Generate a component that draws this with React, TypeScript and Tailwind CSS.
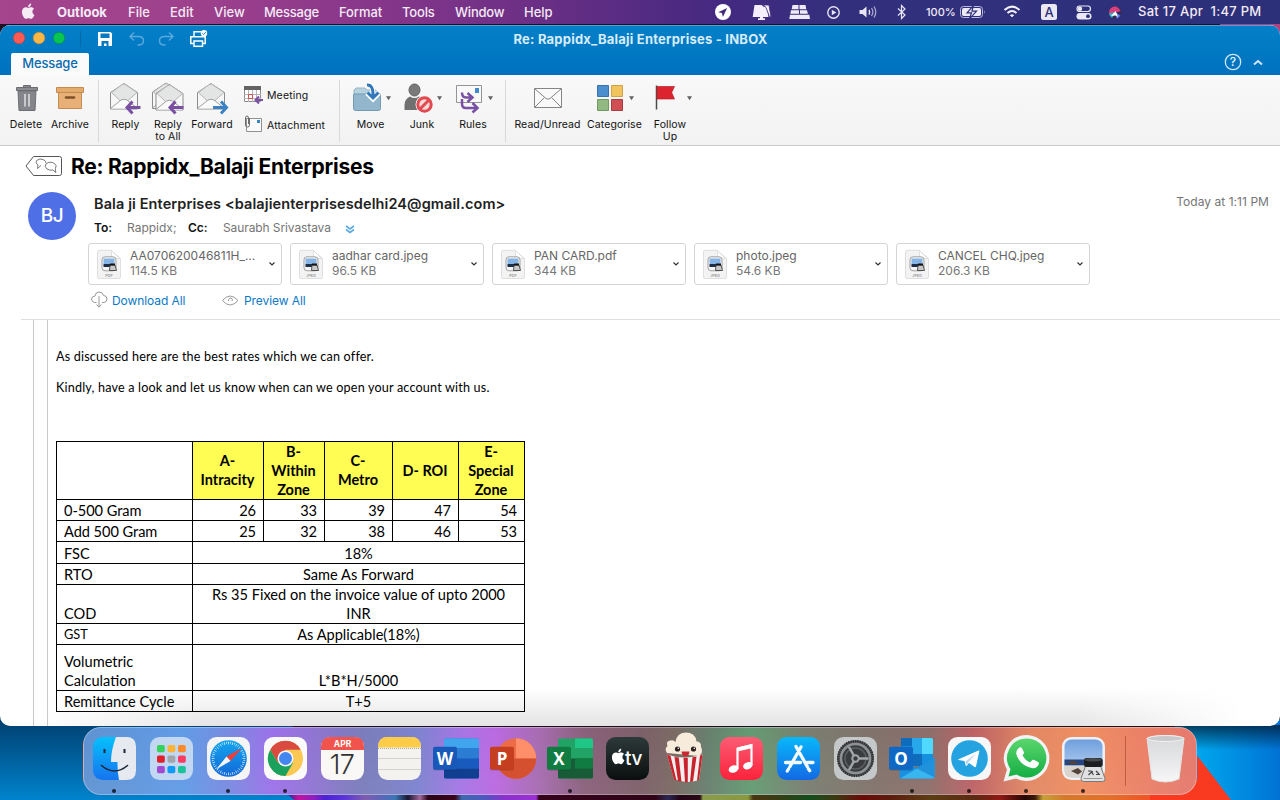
import React from "react";

type Cell = { x: number; w: number; node: React.ReactNode };

/* ---------- Menu bar ---------- */

const menus: [string, string][] = [
  ["Outlook", "w-[71px] font-bold"],
  ["File", "w-[42px]"],
  ["Edit", "w-[44px]"],
  ["View", "w-[50px]"],
  ["Message", "w-[75px] tracking-[-0.25px]"],
  ["Format", "w-[63px] tracking-[-0.1px]"],
  ["Tools", "w-[53px] tracking-[-0.15px]"],
  ["Window", "w-[69px] tracking-[-0.2px]"],
  ["Help", "w-[40px]"],
];

const APPLE =
  "M12.15 6.9c-.95 0-2.42-1.08-3.96-1.04-2.04.03-3.91 1.18-4.96 3.01-2.12 3.68-.55 9.1 1.52 12.09 1.01 1.45 2.21 3.09 3.79 3.04 1.52-.07 2.09-.99 3.94-.99 1.83 0 2.35.99 3.96.95 1.64-.03 2.68-1.48 3.68-2.95 1.16-1.69 1.64-3.33 1.66-3.41-.04-.01-3.18-1.22-3.22-4.86-.03-3.04 2.48-4.49 2.6-4.56-1.43-2.09-3.62-2.32-4.39-2.38-2-.16-3.68 1.09-4.61 1.09zM15.53 3.83c.84-1.01 1.4-2.43 1.25-3.83-1.21.05-2.66.8-3.53 1.82-.78.9-1.45 2.34-1.27 3.71 1.34.1 2.71-.69 3.56-1.7";

const statusLeft: Cell[] = [
  {
    x: 704, w: 39,
    node: (<><circle cx="723" cy="12" r="8" fill="#fff" /><path d="M727.2 8l-9 4.2 3.7.9 1 3.8z" fill="#432a7d" /></>),
  },
  {
    x: 743, w: 38,
    node: (<><path d="M754.500 5h7l2.500 2h3l1.500 10h-5.500v1.300h2v1.700h-7v-1.700h2V17h-7.300z" fill="#f4effa" /><path d="M763 5h6l2 12h-1.500L766 7.500z" fill="#f4effa" stroke="#3d2b7e" strokeWidth=".8" /></>),
  },
  {
    x: 781, w: 37,
    node: (<><path d="M792.500 5h6v4.200h-6.800zM799.500 5h6l.8 4.200h-6.800zM791 10.200h8v3.600h-8.700zM800 10.200h7l.9 3.600H800zM790 14.800h19.300l.7 4.200h-20.700z" fill="#eeeaf6" /></>),
  },
  {
    x: 818, w: 32,
    node: (<><circle cx="833.500" cy="12.500" r="5.700" fill="none" stroke="#e8e6f4" strokeWidth="1.400" /><path d="M831.800 9.800l4.500 2.700-4.500 2.700z" fill="#e8e6f4" /></>),
  },
  {
    x: 850, w: 36,
    node: (<><path d="M859.500 10h3l4-3.500v11l-4-3.500h-3z" fill="#e8e6f4" /><path d="M869 9.800q1.500 2.400 0 4.800" stroke="#e8e6f4" fill="none" strokeWidth="1.400" /><path d="M871.500 8q2.700 4 0 8M874 6.500q3.600 5.500 0 11" stroke="#a8a4cf" fill="none" strokeWidth="1.300" /></>),
  },
  {
    x: 886, w: 34,
    node: (<path d="M898 8.500l7 6.500-3.500 3.500V5.500l3.500 3.500-7 6.500" fill="none" stroke="#e8e6f4" strokeWidth="1.200" />),
  },
];

const statusRight: Cell[] = [
  {
    x: 957, w: 37,
    node: (
      <>
        <rect x="960.500" y="6.500" width="22" height="11" rx="3" fill="none" stroke="#b9b7da" />
        <rect x="962" y="8" width="19" height="8" rx="1.700" fill="#eceaf6" />
        <path d="M984 10.200v3.600q1.500-1.800 0-3.600z" fill="#b9b7da" />
        <path d="M973.500 5.500l-6.500 7.300h4.500l-2 6 7-7.600H972z" fill="#eceaf6" stroke="#30307c" strokeWidth="1.200" />
      </>
    ),
  },
  {
    x: 994, w: 37,
    node: (<g fill="none" stroke="#f1f0f9" strokeWidth="2.100"><path d="M1004.500 10q7.500-6.600 15 0" /><path d="M1007.500 13q4.500-4 9 0" /><path d="M1010.300 15.200l1.700 1.700 1.700-1.700q-1.700-1.100-3.400 0z" fill="#f1f0f9" strokeWidth=".8" /></g>),
  },
  {
    x: 1031, w: 35,
    node: (<><rect x="1041" y="4" width="16" height="16" rx="2.500" fill="#e9e8f3" /><text x="1049" y="16.600" textAnchor="middle" fontSize="13" fontWeight="500" fill="#2d3079">A</text></>),
  },
  {
    x: 1066, w: 33,
    node: (<><rect x="1077" y="6" width="13.500" height="5.500" rx="2.750" fill="none" stroke="#e9e8f3" strokeWidth="1.200" /><circle cx="1080" cy="8.700" r="2.200" fill="#e9e8f3" /><rect x="1076.500" y="13" width="15" height="6.500" rx="3.250" fill="#e9e8f3" /><circle cx="1088" cy="16.200" r="1.900" fill="#2d3079" /></>),
  },
  {
    x: 1099, w: 39,
    node: (<><circle cx="1115" cy="12.500" r="6.300" fill="#34294f" /><path d="M1109 14.500q-.5-8 6.500-8.300 4 1.500 5 5l-5 1.300z" fill="#d8407d" /><path d="M1109 13.500l7-1.500-4 6q-2.500-1.500-3-4.500z" fill="#35b3c5" /><path d="M1116 12.500l4.500 3q-2 3-4 3.200z" fill="#5d78e8" /><path d="M1111 16l4.700-5 2.300 6-2.500-1.500z" fill="#fff" /></>),
  },
];

function Strip({ cells }: { cells: Cell[] }) {
  return (
    <>
      {cells.map((c) => (
        <svg key={c.x} width={c.w} height="24" viewBox={`${c.x} 0 ${c.w} 24`} className="shrink-0">
          {c.node}
        </svg>
      ))}
    </>
  );
}

function MenuBar() {
  return (
    <div className="flex h-6 w-full items-center bg-[linear-gradient(90deg,#a4458d_0%,#9e418c_15%,#8b388b_27%,#6a2f85_42%,#452980_56%,#32307d_66%,#2c3079_100%)] text-[13px] font-medium text-[#f4eaf5]">
      <svg width="57" height="24" viewBox="0 0 57 24" className="shrink-0">
        <g transform="translate(20.500 3.500) scale(.64)"><path d={APPLE} fill="#f6ecf6" /></g>
      </svg>
      {menus.map(([name, cls]) => (
        <span key={name} className={`shrink-0 whitespace-nowrap pt-[2px] ${cls}`}>{name}</span>
      ))}
      <span className="flex-1" />
      <Strip cells={statusLeft} />
      <span className="w-[37px] shrink-0 pl-[6px] pt-px text-[11px]">100%</span>
      <Strip cells={statusRight} />
      <span className="w-[142px] shrink-0 whitespace-pre tracking-[0.28px]">Sat 17 Apr  1:47 PM</span>
    </div>
  );
}

/* ---------- Window title ---------- */

function TitleBar() {
  return (
    <div className="flex h-[50px] shrink-0 flex-col border-t border-[#4aa3dc] bg-[linear-gradient(180deg,#0380c8,#0071be)]">
      <div className="flex h-[27px] items-center">
        <svg width="220" height="27" viewBox="0 26 220 27">
          <circle cx="19" cy="38" r="5.800" fill="#fe5a54" stroke="#c9484d" strokeWidth=".8" />
          <circle cx="39" cy="38" r="5.800" fill="#fcb744" stroke="#c48f48" strokeWidth=".8" />
          <circle cx="59" cy="38" r="5.800" fill="#08c452" stroke="#079150" strokeWidth=".8" />
          <path d="M80.500 31v16" stroke="#0868a8" />
          <path d="M98 32h12.500l1.500 1.500V46H98z" fill="#fff" />
          <path d="M100.500 33.500h9v4.500h-9zM101.500 41h7v5h-2v-2.500h-2.500V46h-2.500z" fill="#0779c1" />
          <g fill="none" stroke="#5ba8db" strokeWidth="1.400">
            <path d="M134 32.500l-4 4 4 4M130.500 36.500h8q5 0 5 4.200 0 4.300-5 4.300h-1" />
            <path d="M169 32.500l4 4-4 4M172.500 36.500h-8q-5 0-5 4.200 0 4.300 5 4.300h1" />
          </g>
          <g fill="none" stroke="#fff" strokeWidth="1.500">
            <path d="M194 37v-5.300h7M202.500 37v-1M193.500 43.500h-2.700v-6.700h14.400v6.700h-2.700" />
            <rect x="194" y="41" width="8.500" height="5.300" />
          </g>
          <circle cx="204" cy="33.300" r="3.200" fill="#fff" />
          <path d="M202.400 33.300l1.200 1.200 2.200-2.300" fill="none" stroke="#0779c1" strokeWidth=".9" />
        </svg>
        <h1 className="w-[841px] pt-px text-center text-[13px] font-bold tracking-[0.22px] text-[#d8ecf8]">Re: Rappidx_Balaji Enterprises - INBOX</h1>
      </div>
      <div className="flex h-[22px] items-end justify-between pl-[11px]">
        <div className="flex h-[22px] w-[78px] items-center justify-center rounded-t-[2px] bg-[#fbfbfb] pb-px text-[13px] font-medium tracking-[-0.15px] text-[#0c6cae]">Message</div>
        <svg width="70" height="22" viewBox="1210 53 70 22">
          <circle cx="1233" cy="62" r="7.700" fill="none" stroke="#cfe6f5" strokeWidth="1.300" />
          <text x="1233" y="66.400" textAnchor="middle" fontSize="12" fontWeight="500" fill="#e8f4fb">?</text>
          <path d="M1254 64.500l4-3.500 4 3.500" fill="none" stroke="#cfe6f5" strokeWidth="2" />
        </svg>
      </div>
    </div>
  );
}

/* ---------- Ribbon ---------- */

const Envelope = ({ x }: { x: number }) => (
  <g transform={`translate(${x} 0)`} stroke="#8d8d8d" strokeWidth="1" strokeLinejoin="round">
    <path d="M.5 92.500L14 83.500l13.500 9V109H.5z" fill="#f7f7f7" />
    <path d="M1.500 92.500l10-7.500 3-1 12.500 8.500-9 8h-8z" fill="#e3e4e4" stroke="#b5b5b5" />
    <path d="M.5 108.500l10.500-8.500q3-1.500 6 0l10.500 8.500" fill="#fafafa" stroke="#9f9f9f" />
  </g>
);
const Back = ({ x }: { x: number }) => (
  <path d={`M${x + 15} 107.500h-13M${x + 7} 101.500l-5.500 6 5.500 6`} fill="none" stroke="#7a50a3" strokeWidth="3" />
);
const Caret = ({ x, y = 98 }: { x: number; y?: number }) => (
  <path d={`M${x - 2.500} ${y - 1.800}h5l-2.500 4z`} fill="#626262" />
);

const icons: Record<string, React.ReactNode> = {
  Delete: (
    <>
      <path d="M18 91h18l-1 19.500H19z" fill="#85868b" stroke="#6d6e73" />
      <path d="M16.500 87.500h21v3h-21zM23.500 87.500v-2h7v2" fill="#8b8c90" stroke="#6d6e73" />
      <path d="M25 94v12.500M29 94v12.500" stroke="#eee" strokeWidth="1.300" />
    </>
  ),
  Archive: (
    <>
      <path d="M58.500 91.500h23v17h-23z" fill="#e8b076" stroke="#c48c50" />
      <path d="M56.500 87.500h27v5h-27z" fill="#e5ab6d" stroke="#c48c50" />
      <path d="M66 97.500h8" stroke="#7d5128" strokeWidth="2.600" strokeLinecap="round" />
    </>
  ),
  Reply: (<><Envelope x={110} /><Back x={125.500} /></>),
  "Reply to All": (<><g transform="translate(0 -.5)"><Envelope x={152} /></g><g transform="translate(0 1)"><Envelope x={155.500} /></g><Back x={168.500} /></>),
  Forward: (<><Envelope x={197} /><path d="M213 107.500h13M221 101.500l5.500 6-5.500 6" fill="none" stroke="#3a82c4" strokeWidth="3" /></>),
  Move: (
    <>
      <path d="M354 96v-6l2-2h9l2 2h9v8z" fill="#b7d2df" stroke="#96b4c5" />
      <path d="M354 94h26.500v14.500q0 2-2 2h-23q-2 0-2-2V95z" fill="#92b7cc" stroke="#729bb1" />
      <path d="M367 84.500q6.500 0 6 11M367 93l6 6 6-6" fill="none" stroke="#fff" strokeWidth="5" />
      <path d="M367 85q6.500-.5 6 11.500M367.500 92.500l5.500 5.500 5.500-5.500" fill="none" stroke="#3078bb" strokeWidth="3" />
      <Caret x={388.500} />
    </>
  ),
  Junk: (
    <>
      <ellipse cx="414.500" cy="90" rx="5.500" ry="6" fill="#7b7a7a" stroke="#5f5e5e" />
      <path d="M404.500 110v-5q0-6 5.500-8.500 4.500 3 9 0 5 2 5.500 8v5.500z" fill="#717070" />
      <circle cx="424.500" cy="104.500" r="9" fill="#f4f4f4" />
      <circle cx="424.500" cy="104.500" r="6.700" fill="#f5dada" stroke="#e04a50" strokeWidth="3" />
      <path d="M420 109l9-9" stroke="#e04a50" strokeWidth="3" />
      <Caret x={439.500} />
    </>
  ),
  Rules: (
    <>
      <path d="M456.500 85.500h25v17h-25z" fill="#f9f9f9" stroke="#949494" />
      <path d="M475 88h4v5h-4z" fill="#418acb" />
      <path d="M462 92.500q0 5 4 5h5M467.500 93l5 4.500-5 4.500M462 99v5q0 4 4 4h10M472.500 103l5 5-5 4.500" fill="none" stroke="#7950a3" strokeWidth="2.500" />
      <Caret x={490.500} />
    </>
  ),
  "Read/Unread": (
    <g fill="none" stroke="#858585">
      <path d="M534.500 88.500h27v19h-27z" fill="#f9f9f9" />
      <path d="M535 89l11 9.500q2 1.500 4 0L561 89M535 107l9.500-9.500M561 107l-9.500-9.500" />
    </g>
  ),
  Categorise: (
    <>
      <path d="M597.500 85.500h11v11h-11z" fill="#4c8fce" stroke="#3674ad" />
      <path d="M611.500 85.500h11v11h-11z" fill="#f2c45e" stroke="#d2a344" />
      <path d="M597.500 99.500h11v11h-11z" fill="#93b982" stroke="#719b62" />
      <path d="M611.500 99.500h11v11h-11z" fill="#cf4f54" stroke="#ad3a40" />
      <Caret x={631.500} />
    </>
  ),
  "Follow Up": (
    <>
      <path d="M656.500 85.500v24" stroke="#4b4b4b" strokeWidth="1.500" />
      <path d="M657 86.500h17.500l-2.800 6 2.800 6.500H657z" fill="#dc242e" stroke="#b9222a" strokeWidth=".7" />
      <Caret x={689.500} />
    </>
  ),
};

function Tool({ name, x, w, center, lines }: { name: string; x: number; w: number; center: number; lines?: string[] }) {
  const shift = center * 2 - (2 * x + w);
  return (
    <div className="flex shrink-0 flex-col items-center" style={{ width: w }}>
      <svg width={w} height="37" viewBox={`${x} 80 ${w} 37`}>{icons[name]}</svg>
      <div className="flex flex-col items-center whitespace-nowrap text-[10.500px] leading-[12px] tracking-[0.08px] text-[#111]" style={{ paddingLeft: Math.max(shift, 0), paddingRight: Math.max(-shift, 0), paddingTop: 2 }}>
        {(lines ?? [name]).map((l) => <span key={l}>{l}</span>)}
      </div>
    </div>
  );
}

const Divider = () => <div className="h-[62px] w-px shrink-0 bg-[#d9d9d9]" />;

function Ribbon() {
  return (
    <div className="flex h-[71px] shrink-0 border-b border-[#cbcbcb] bg-[linear-gradient(180deg,#f9f9f9,#f2f2f2)] pt-[5px]">
      <div className="flex w-[98px] pl-1">
        <Tool name="Delete" x={4} w={44} center={26} />
        <Tool name="Archive" x={48} w={44} center={70} />
      </div>
      <Divider />
      <div className="flex w-[240px] pl-[6px]">
        <Tool name="Reply" x={105} w={41} center={125.500} />
        <Tool name="Reply to All" x={146} w={44} center={168} lines={["Reply", "to All"]} />
        <Tool name="Forward" x={190} w={44} center={212} />
        <div className="flex flex-col gap-[11px] pl-[10px] pt-[5px] text-[10.500px] leading-[19px] tracking-[0.14px] text-[#111]">
          <div className="flex h-[19px] items-center gap-1">
            <svg width="19" height="19" viewBox="244 85 19 19">
              <path d="M244.500 87.500h16v14h-16z" fill="#fff" stroke="#8b8b8b" /><path d="M244 86h17v4h-17z" fill="#636363" />
              <path d="M248.500 90v12M252.500 90v12M256.500 90v12M244 94.500h17M244 98.500h17" stroke="#b5b5b5" />
              <path d="M248.500 94.500h4v4h-4z" fill="#fff" stroke="#d5504c" />
              <path d="M264 100h-8M259 96.500l-3.500 3.500 3.500 3.500" fill="none" stroke="#7a50a3" strokeWidth="2" />
            </svg>
            <span className="pt-[2px]">Meeting</span>
          </div>
          <div className="flex h-[19px] items-center gap-1">
            <svg width="19" height="19" viewBox="244 115 19 19">
              <path d="M246.500 118.500h15v13h-15z" fill="#fafafa" stroke="#909090" /><path d="M257 120h3v3h-3z" fill="#3786c8" />
              <path d="M249.500 118v7q0 2-2 2t-2-2v-7q0-2 1.500-2t1.500 2v6" fill="none" stroke="#6c6c6c" />
            </svg>
            <span className="pt-[2px]">Attachment</span>
          </div>
        </div>
      </div>
      <Divider />
      <div className="flex w-[165px] pl-[4px]">
        <Tool name="Move" x={344} w={51} center={370.500} />
        <Tool name="Junk" x={395} w={51} center={422} />
        <Tool name="Rules" x={446} w={51} center={473} />
      </div>
      <Divider />
      <div className="flex pl-[5px]">
        <Tool name="Read/Unread" x={511} w={73} center={547.500} />
        <Tool name="Categorise" x={584} w={60} center={614.500} />
        <Tool name="Follow Up" x={644} w={54} center={670} lines={["Follow", "Up"]} />
      </div>
    </div>
  );
}

/* ---------- Message header ---------- */

const attachments = [
  { name: "AA070620046811H_...", size: "114.5 KB", type: "PDF" },
  { name: "aadhar card.jpeg", size: "96.5 KB", type: "JPEG" },
  { name: "PAN CARD.pdf", size: "344 KB", type: "PDF" },
  { name: "photo.jpeg", size: "54.6 KB", type: "JPEG" },
  { name: "CANCEL CHQ.jpeg", size: "206.3 KB", type: "JPEG" },
];

function FileIcon({ type }: { type: string }) {
  return (
    <svg width="26" height="32" viewBox="0 -1.500 26 32" className="shrink-0">
      <path d="M3 .8h12L24.500 9v18.500q0 1.500-1.500 1.500h-20Q1.500 29 1.500 27.500v-25Q1.500.8 3 .8z" fill="#f3f3f3" stroke="#d8d8d8" strokeWidth=".8" />
      <path d="M15.500 1v6.500q0 1.500 1.500 1.500h6.500z" fill="#fff" stroke="#d0d0d0" strokeWidth=".6" />
      <rect x="6" y="7.300" width="14" height="14" rx="3" fill="#f5f5f5" stroke="#999" strokeWidth=".9" />
      <path d="M7.500 9h11v5.500h-11z" fill="#86b4e4" />
      <path d="M7.500 14.500h11v3h-11z" fill="#1c2d46" />
      <path d="M14 15.500h5l1.500 5.500h-7z" fill="#c8c8c8" stroke="#333" strokeWidth=".8" />
      <path d="M14 15h5" stroke="#151515" strokeWidth="2" />
      <text x="13" y="27" textAnchor="middle" fontSize="3.800" fontWeight="600" fill="#9b9b9b">{type}</text>
    </svg>
  );
}

function Header() {
  return (
    <div className="flex shrink-0 flex-col">
      <div className="flex h-[42px] items-center">
        <svg width="71" height="42" viewBox="0 146 71 42" fill="none" stroke="#555" strokeWidth="1">
          <path d="M26 166l7.500-9.500h26q2 0 2 2v15q0 2-2 2h-26z" />
          <path d="M37.500 168.500l.5-3.500q-3.200-2-1.300-4.500 3-3 7.500-.5 2 1.500 1.500 3M41 165.500l-3.500 3" strokeWidth=".8" />
          <path d="M47 169q-3-2.500-1-5 4-3.300 8.500-.5 3 2.300.8 5l.5 4-3-2.500q-3 .7-5.800-1z" strokeWidth=".8" />
        </svg>
        <h2 className="text-[21px] font-bold tracking-[-0.27px] text-black">Re: Rappidx_Balaji Enterprises</h2>
      </div>
      <div className="flex h-[55px]">
        <div className="ml-[28px] mt-1 flex size-12 items-center justify-center rounded-full bg-[#4f6fe6] pt-px text-[19px] font-medium tracking-[-0.5px] text-white">BJ</div>
        <div className="ml-[18px] flex flex-1 flex-col">
          <div className="flex h-[31px] items-center justify-between pr-[11px] pt-px">
            <span className="text-[14.500px] font-semibold tracking-[0.1px] text-[#222]">Bala ji Enterprises &lt;balajienterprisesdelhi24@gmail.com&gt;</span>
            <span className="pb-1 text-[12px] tracking-[0.05px] text-[#757575]">Today at 1:11 PM</span>
          </div>
          <div className="flex h-[18px] items-center text-[12px] text-[#757575]">
            <b className="w-[33px] font-semibold text-[#111]">To:</b>
            <span className="w-[61px]">Rappidx;</span>
            <b className="w-[35px] font-semibold text-[#111]">Cc:</b>
            <span className="w-[122px] tracking-[-0.1px]">Saurabh Srivastava</span>
            <svg width="10" height="12" viewBox="0 -1 10 12" fill="none" stroke="#5ba9e4" strokeWidth="1.600"><path d="M1 3l4 3 4-3M1 6.500l4 3 4-3" /></svg>
          </div>
        </div>
      </div>
      <div className="flex gap-2 pl-[88px]">
        {attachments.map((a) => (
          <div key={a.name} className="flex h-[42px] w-[194px] items-center rounded-[3px] border border-[#d4d4d4] bg-white pl-[7px] pr-[5px]">
            <FileIcon type={a.type} />
            <div className="ml-2 flex flex-1 flex-col whitespace-nowrap pb-[2px] text-[12px] leading-[15px] text-[#666]">
              <span>{a.name}</span>
              <span className="text-[#777]">{a.size}</span>
            </div>
            <svg width="8" height="6" viewBox="0 0 8 6" fill="none" stroke="#333" strokeWidth="1.200"><path d="M1.500 1.500L4 4l2.500-2.500" /></svg>
          </div>
        ))}
      </div>
      <div className="flex h-[34px] items-center pb-[3px] text-[12px] tracking-[-0.08px] text-[#0b78c7]">
        <svg width="112" height="30" viewBox="0 286 112 30" fill="none" stroke="#999">
          <path d="M96.500 302.500h-2q-3-.5-3-3.500.5-3 3.500-3 .5-4 4-4 4 0 4.500 3.500 3.500 0 3.500 3.500 0 3-3 3.500h-2M99 296v11M96.500 304.500l2.500 2.700 2.500-2.700" />
        </svg>
        <span className="w-[110px]">Download All</span>
        <svg width="22" height="30" viewBox="222 286 22 30" fill="none" stroke="#999"><path d="M222.500 300.500q7.500-9 15.500 0-8 9-15.500 0z" /><path d="M231 298a2.500 2.500 0 0 0-2.500 3M231 298a2 2 0 0 1 1 3" /></svg>
        <span>Preview All</span>
      </div>
      <div className="ml-[21px] h-px bg-[#dedede]" />
    </div>
  );
}

/* ---------- Message body ---------- */

const rates = [
  ["0-500 Gram", "26", "33", "39", "47", "54"],
  ["Add 500 Gram", "25", "32", "38", "46", "53"],
];
const terms: [string[], string[]][] = [
  [["FSC"], ["18%"]],
  [["RTO"], ["Same As Forward"]],
  [["COD"], ["Rs 35 Fixed on the invoice value of upto 2000", "INR"]],
  [["GST"], ["As Applicable(18%)"]],
  [["Volumetric", "Calculation"], ["L*B*H/5000"]],
  [["Remittance Cycle"], ["T+5"]],
];
const zones = [["A-", "Intracity"], ["B-", "Within", "Zone"], ["C-", "Metro"], ["D- ROI"], ["E-", "Special", "Zone"]];

function Body() {
  return (
    <div className="flex min-h-0 flex-1 overflow-hidden pl-[33px] font-['Lato','Carlito',sans-serif] text-black">
      <div className="w-[15px] shrink-0 border-x border-[#c9c9c9]" />
      <div className="flex flex-col pl-[8px] pt-[28px]">
        <p className="h-[31px] whitespace-nowrap text-[12.600px] leading-[18px] tracking-[0.18px]">As discussed here are the best rates which we can offer.</p>
        <p className="h-[62px] whitespace-nowrap text-[12.600px] leading-[18px] tracking-[0.18px]">Kindly, have a look and let us know when can we open your account with us.</p>
        <div className="grid grid-cols-[136px_71px_61px_68px_66px_66px] grid-rows-[58px_21px_21px_22px_21px_39px_21px_46px_21px] border-l border-t border-black text-[14.600px] leading-[19px]">
          <div className="border-b border-r border-black" />
          {zones.map((z) => (
            <div key={z.join()} className="flex flex-col items-center justify-center border-b border-r border-black bg-[#fffd54] pb-px pr-px text-[14.500px] font-bold">
              {z.map((l) => <span key={l}>{l}</span>)}
            </div>
          ))}
          {rates.map((r) => r.map((v, i) => (
            <div key={v} className={`flex items-end border-b border-r border-black pl-[7px] pr-[7px] tracking-[-0.05px] ${i ? "justify-end" : ""}`}>{v}</div>
          )))}
          {terms.map(([k, v]) => (
            <React.Fragment key={k[0]}>
              <div className={`flex flex-col justify-end whitespace-nowrap border-b border-r border-black pl-[7px] ${k[0] === "GST" ? "text-[12.800px]" : ""}`}>
                {k.map((l) => <span key={l}>{l}</span>)}
              </div>
              <div className="col-span-5 flex flex-col items-center justify-end whitespace-nowrap border-b border-r border-black">
                {v.map((l) => <span key={l}>{l}</span>)}
              </div>
            </React.Fragment>
          ))}
        </div>
      </div>
    </div>
  );
}

/* ---------- Dock ---------- */

const Tile = ({ fill }: { fill: string }) => <rect x="7" y="7" width="43" height="43" rx="9.500" fill={fill} />;
const Badge = ({ fill, letter }: { fill: string; letter: string }) => (
  <>
    <rect x="5" y="17.500" width="24" height="23" rx="2" fill="#000" opacity=".18" />
    <rect x="5" y="16.800" width="24" height="23" rx="2" fill={fill} />
    <text x="17" y="34.500" textAnchor="middle" fontSize="17" fontWeight="700" fill="#fff" fontFamily="Open Sans, sans-serif">{letter}</text>
  </>
);

const polar = (deg: number, r: number, c = 28.500) => [c + r * Math.sin((deg * Math.PI) / 180), c - r * Math.cos((deg * Math.PI) / 180)];
const ticks = Array.from({ length: 48 }, (_, i) => {
  const [a, b] = polar(i * 7.500, 16.800);
  const [c, d] = polar(i * 7.500, i % 2 ? 15 : 14);
  return `M${a} ${b}L${c} ${d}`;
}).join("");

const padColors = ["#36d25d", "#fcb437", "#fa8a2b", "#e0202c", "#a2a5aa", "#fb3a63", "#a04ad0", "#1299f2", "#1cc39a"];

const apps: { dot?: boolean; art: React.ReactNode }[] = [
  {
    dot: true,
    art: (
      <>
        <Tile fill="url(#finder)" />
        <path d="M30 7h10.500Q50 7 50 16.500v24Q50 50 40.500 50H33q-1.700-8-1.500-18H25Q25 20 30 7z" fill="#e6e9f0" />
        <path d="M18.500 19v4M38.500 19v4" stroke="#1c2635" strokeWidth="2" />
        <path d="M15.500 35.500q13 11 26 0" fill="none" stroke="#1d2735" strokeWidth="1.600" strokeLinecap="round" />
      </>
    ),
  },
  { art: (<><Tile fill="#c2d7f1" />{padColors.map((c, i) => <rect key={c} x={14 + (i % 3) * 10.500} y={15 + Math.floor(i / 3) * 10.500} width="7.800" height="7.300" rx="1.700" fill={c} />)}</>) },
  {
    dot: true,
    art: (<><Tile fill="#f5f5f5" /><circle cx="28.500" cy="28.500" r="18.300" fill="url(#safari)" /><path d={ticks} stroke="#d9edfb" strokeWidth=".8" /><path d="M42 18L30.500 31l-4-4.500z" fill="#ef3d38" /><path d="M16 39.500l10.500-13 4 4.500z" fill="#f5f5f5" /></>),
  },
  {
    dot: true,
    art: (
      <>
        <Tile fill="#fafafa" />
        <circle cx="28.500" cy="28.500" r="17.500" fill="#fcc854" />
        <path d="M13.300 19.700a17.500 17.500 0 0 1 30.400 0H28.500L21 33z" fill="#da4b3f" />
        <path d="M13.300 19.700A17.500 17.500 0 0 0 28.500 46l7.600-13.200-15.100.2z" fill="#1aa15d" />
        <circle cx="28.500" cy="28.500" r="8" fill="#f7f7f7" /><circle cx="28.500" cy="28.500" r="6.500" fill="#4486f0" />
      </>
    ),
  },
  {
    art: (
      <>
        <Tile fill="#f9f8f7" /><path d="M7 20v-3.500Q7 7 16.500 7h24Q50 7 50 16.500V20z" fill="#f1544d" />
        <text x="28.500" y="17" textAnchor="middle" fontSize="8.500" fontWeight="700" fill="#fff">APR</text>
        <text x="28" y="43.500" textAnchor="middle" fontSize="27" fontWeight="300" fill="#333" letterSpacing="-.5">17</text>
      </>
    ),
  },
  { art: (<><Tile fill="#f3f2ef" /><path d="M7 17.500v-1Q7 7 16.500 7h24Q50 7 50 16.500v1z" fill="#fccb47" /><path d="M7 18.500h43" stroke="#b1aaa0" strokeDasharray="1 1" /><path d="M7 28.500h43M7 39.500h43" stroke="#d2d1ce" /></>) },
  { art: (<><rect x="16" y="8.500" width="35" height="40" rx="2" fill="#2b7cd3" /><path d="M16 18V10.500q0-2 2-2h31q2 0 2 2V18z" fill="#41a5ee" /><path d="M16 28.500h35v10H16z" fill="#185abd" /><path d="M16 38.500h35V47q0 1.500-2 1.500H18q-2 0-2-1.500z" fill="#103f91" /><Badge fill="#1858b8" letter="W" /></>) },
  { art: (<><circle cx="31" cy="28.500" r="20.200" fill="#ed6c47" /><path d="M31 8.300a20.200 20.200 0 0 1 20.200 20.200H31z" fill="#ff8f6b" /><path d="M10.800 28.500a20.200 20.200 0 0 0 40.400 0z" fill="#d5502f" /><Badge fill="#c43e1f" letter="P" /></>) },
  { dot: true, art: (<><rect x="16" y="8.500" width="35" height="40" rx="2" fill="#21a366" /><path d="M33 8.500h16q2 0 2 2V18H33z" fill="#1fc786" /><path d="M16 28.500h35V47q0 1.500-2 1.500H18q-2 0-2-1.500z" fill="#185c37" /><path d="M33 28.500h18v10H33z" fill="#107c41" /><Badge fill="#107c41" letter="X" /></>) },
  {
    art: (<><Tile fill="url(#tv)" /><g transform="translate(11.500 18.800) scale(.64)"><path d={APPLE} fill="#fff" /></g><text x="26" y="34.500" fontSize="19" fontWeight="500" fill="#fff" letterSpacing="-.3">tv</text></>),
  },
  {
    art: (
      <>
        <path d="M11 24q-3-4 .5-7-2-5 3-5.500 3-1 5 1.500 1-9 10-9.500 10 0 11 9 5 0 4.500 5.500 3 5-2 9z" fill="#f7ecdc" transform="translate(0 -1)" />
        <path d="M11 24.500q16 6 35.500 0l-3.500 25.500q-13 4.500-25-1z" fill="#f4eeee" />
        <path d="M11 24.500l3.500 1.200 6 24.800-2.500-1zM18.500 27l4.300.5 2.700 24.300-3.500-.8zM27.500 27.800h4.300v24.500H29zM36.500 27.300l4-.8-3.500 25-3 .5zM44 25.500l2.500-.8L43 50l-2 .7z" fill="#c8232c" />
        <circle cx="21.500" cy="19" r="2.600" fill="#2c2020" /><circle cx="37.500" cy="19" r="2.600" fill="#2c2020" />
        <circle cx="22.300" cy="18.200" r=".8" fill="#fff" /><circle cx="38.300" cy="18.200" r=".8" fill="#fff" />
        <path d="M25.500 21.500h8q-.5 5-4 5t-4-5z" fill="#c92a31" />
      </>
    ),
  },
  { art: (<><Tile fill="url(#music)" /><path d="M24.500 39V18.500l14-3.300v20" fill="none" stroke="#fff" strokeWidth="2.200" /><path d="M24.500 17.500l14-3.200v4l-14 3.200z" fill="#fff" /><ellipse cx="20.500" cy="39" rx="5" ry="3.600" fill="#fff" transform="rotate(-20 20.500 39)" /><ellipse cx="34.800" cy="35.700" rx="4.800" ry="3.500" fill="#fff" transform="rotate(-20 34.800 35.700)" /></>) },
  { art: (<><Tile fill="url(#store)" /><path d="M31 17L20 36.500M26 16.500L37.500 37M15.500 32.500h15M37 32.500h6M18.500 39l-1.200 2M38.500 39l1.200 1.700" stroke="#f3faff" strokeWidth="3.300" strokeLinecap="round" /></>) },
  {
    art: (
      <>
        <Tile fill="#c5c8c9" /><circle cx="28.500" cy="28.500" r="18.300" fill="#55585b" />
        <circle cx="28.500" cy="28.500" r="17.300" fill="none" stroke="#2c2e30" strokeWidth="2.500" strokeDasharray="1.300 1" />
        <circle cx="28.500" cy="28.500" r="14.500" fill="#393b3d" stroke="#8d9193" strokeWidth="2.500" />
        <circle cx="28.500" cy="28.500" r="10.500" fill="none" stroke="#5d6062" strokeWidth="1.500" />
        <path d="M28.500 28.500h13M28.500 28.500l-6.500-11.500M28.500 28.500l-6.500 11.500" stroke="#a3a7a9" strokeWidth="2.500" />
        <circle cx="28.500" cy="28.500" r="4.200" fill="#a3a7a9" /><circle cx="28.500" cy="28.500" r="2.200" fill="#393b3d" />
      </>
    ),
  },
  {
    dot: true,
    art: (
      <>
        <rect x="17" y="8" width="32" height="28" rx="2" fill="#1490df" />
        <path d="M28 8h10v16H28z" fill="#28a8ea" /><path d="M38 8h9.500q1.500 0 1.500 1.500V24H38z" fill="#50d9ff" /><path d="M28 24h10v12H28zM17 8h11v8H17z" fill="#0f6cbd" />
        <path d="M15.500 48.500V29L32 38l18.500-10v18.500q0 2-2 2z" fill="#1b8fe0" /><path d="M16 48.500L50.500 28v18.500q0 2-2 2z" fill="#39b5f0" /><path d="M29 36.500l21.500 11V28L33 37.500z" fill="#1583d3" opacity=".7" />
        <Badge fill="#0f68c4" letter="O" />
      </>
    ),
  },
  { dot: true, art: (<><Tile fill="#f7f7f8" /><circle cx="28.500" cy="28.500" r="18.300" fill="#24a3e0" /><path d="M17 29.500l20.500-9q1-.2.800 1l-3.300 15q-.5 1.200-1.500.5L28 33l-2.500 3q-.8.300-1-1l-1-4-6-1z" fill="#fff" /><path d="M24.500 31.500l11-8.500-8 9-2 3.500z" fill="#b9d7ea" /></>) },
  {
    dot: true,
    art: (
      <>
        <path d="M29 5A23 23 0 1 1 18 48.500L5.500 51.500 9 39.500A23 23 0 0 1 29 5z" fill="#f2f3f2" />
        <path d="M29 8.500A19.500 19.500 0 1 1 18.500 44.500L10.500 46.500 12.500 39A19.500 19.500 0 0 1 29 8.500z" fill="url(#wa)" />
        <path d="M21.500 17.500q1.500-.8 2.500.8l2 4q.3 1-1.500 3 3 5.500 7.500 7.200l2.300-2.500q.7-.6 1.500-.2l4.700 2.400q.8.600.2 2.300-2 4.300-7 3.500-12.500-3-15.500-14.500 0-4 3.300-6z" fill="#fff" />
      </>
    ),
  },
  {
    dot: true,
    art: (
      <>
        <Tile fill="#eff1f4" /><rect x="9.500" y="9.500" width="38" height="38" rx="7" fill="url(#sky)" />
        <path d="M9.500 29.500h38v6h-38z" fill="#26447f" /><path d="M9.500 35.500h38V41q-1 6.500-7 6.500H16q-6 0-6.500-6.500z" fill="#d9d4cd" />
        <path d="M13 32l6-1.500 4 3.500h-8zM16 41l7-3 4 3.500-4 3z" fill="#54423b" />
        <path d="M30.500 36L26 48.500q0 3 2.500 3h19q3 0 2.500-3L45.500 36z" fill="#dfe1e3" stroke="#777" />
        <rect x="29" y="28" width="18.500" height="9" rx="2.500" fill="#1d1f21" /><ellipse cx="38.200" cy="29.700" rx="8.500" ry="1.800" fill="#47494b" />
        <path d="M33 41h3l2 1M33.500 45l3-3 2 3M41 44.500h4M41 41l3 3" stroke="#444" strokeWidth="1.200" fill="none" />
        <path d="M28.500 48.500h19" stroke="#999" strokeWidth="1" fill="none" />
      </>
    ),
  },
];

function Dock() {
  return (
    <div className="mx-auto flex h-[68px] w-[1114px] shrink-0 rounded-[18px] border border-white/30 bg-[linear-gradient(180deg,rgba(255,255,255,0.02),rgba(255,255,255,0.06)),linear-gradient(90deg,#5b90d0_0%,#5e99e6_9%,#7688df_13%,#9b6ee9_17%,#8c72cf_21%,#777ab8_25%,#7a80ce_30%,#a572e4_34%,#b966df_37%,#a469ae_41%,#885d78_45%,#7a5c66_50%,#786760_53%,#657c6b_56%,#60996f_60%,#777b6e_65%,#7e7068_71%,#8b6b67_76%,#bc5e61_80%,#e18560_85%,#ef8c5f_90%,#eb7e63_95%,#e4776b_100%)] pl-[2px]">
      {apps.map((a, i) => (
        <div key={i} className="flex h-[66px] w-[57px] shrink-0 flex-col items-center">
          <svg width="57" height="57" viewBox="0 -1 57 57" className="mt-px shrink-0 overflow-visible font-['Inter']">{a.art}</svg>
          {a.dot && <div className="mr-px mt-[3px] size-1 shrink-0 rounded-full bg-black/75" />}
        </div>
      ))}
      <div className="ml-[13px] mt-[8px] h-[50px] w-px bg-[#a84e31]/70" />
      <svg width="60" height="62" viewBox="1135 728 60 62" className="ml-[9px]">
        <path d="M1147 738q18-5 37 0l-5 41q-13.500 6-27 0z" fill="url(#bin)" stroke="#e2e3e5" />
        <ellipse cx="1165.500" cy="738.500" rx="18" ry="3" fill="#c9c9cb" stroke="#f2f2f2" />
      </svg>
    </div>
  );
}

function Defs() {
  const list: [string, string, string][] = [
    ["finder", "#06c0fb", "#1674ef"], ["safari", "#14a5ee", "#1268d8"], ["tv", "#2c3a39", "#0b0e0f"],
    ["music", "#fb5c74", "#fa233b"], ["store", "#08b8fa", "#1369e4"], ["wa", "#5bd66e", "#14ae43"],
    ["sky", "#6e9fde", "#c9dcf4"], ["bin", "#d6d7d9", "#f6f6f7"],
  ];
  return (
    <svg width="0" height="0" className="absolute">
      <defs>
        {list.map(([id, a, b]) => (
          <linearGradient key={id} id={id} x1="0" y1="0" x2="0" y2="1"><stop offset="0" stopColor={a} /><stop offset="1" stopColor={b} /></linearGradient>
        ))}
      </defs>
    </svg>
  );
}

/* Colours along the bottom edge of the desktop picture: [x, colour] */
const edge: [number, string][] = [
  [288, "#1b2f9a"], [298, "#c3129b"], [314, "#8d1fc0"], [325, "#4b22d2"], [345, "#5a35d8"], [365, "#7f5cae"], [382, "#5a66b8"],
  [395, "#3b76b4"], [408, "#1a1530"], [420, "#a06a9a"], [428, "#2c0418"], [455, "#37041a"], [462, "#3d6aae"], [485, "#4d58bc"],
  [505, "#8a31cc"], [536, "#9a30d4"], [539, "#35041a"], [655, "#300418"], [668, "#2a2852"], [680, "#230416"], [700, "#2a0a16"],
  [703, "#8a9b4a"], [748, "#8a9840"], [753, "#4a3612"], [775, "#3a3a14"], [810, "#134d1c"], [835, "#3b3a12"], [862, "#6a0a08"],
  [890, "#5b1c0c"], [930, "#5c3d14"], [975, "#5a2a12"], [1000, "#8e1a14"], [1025, "#250606"], [1035, "#3a1a08"], [1043, "#c4a238"],
  [1065, "#d27a2a"], [1110, "#e3702a"], [1150, "#ef5326"], [1200, "#fa3a20"],
];

/* Desktop picture behind the window and the dock */
function Wallpaper() {
  return (
    <svg width="1280" height="800" className="absolute inset-0" aria-hidden="true">
      <defs>
        <linearGradient id="wl" x1="0" y1="0" x2="0" y2="1"><stop offset="0" stopColor="#003c6a" /><stop offset="1" stopColor="#0083cd" /></linearGradient>
        <linearGradient id="wr" x1="0" y1="0" x2="1" y2="0"><stop offset="0" stopColor="#00b8f5" /><stop offset="1" stopColor="#0072d4" /></linearGradient>
        <linearGradient id="ws" x1="0" y1="0" x2="0" y2="1"><stop offset="0" stopColor="#001e38" stopOpacity=".8" /><stop offset="1" stopColor="#001e38" stopOpacity="0" /></linearGradient>
        <linearGradient id="we" gradientUnits="userSpaceOnUse" x1="288" y1="0" x2="1200" y2="0">
          {edge.map(([x, c]) => <stop key={x} offset={(x - 288) / 912} stopColor={c} />)}
        </linearGradient>
      </defs>
      <path d="M0 0h1280v800H0z" fill="#20101f" />
      <path d="M1220 20h60v40h-60z" fill="#b0417f" />
      <path d="M0 715h290l20 85H0z" fill="url(#wl)" />
      <path d="M286 793h914v7H294z" fill="url(#we)" />
      <path d="M1150 740h40l45 60h-85z" fill="#fa3a20" />
      <path d="M1170 720h110v80h-49z" fill="url(#wr)" />
      <path d="M1170 725h110v25h-110z" fill="url(#ws)" />
    </svg>
  );
}

export default function App() {
  return (
    <div className="relative h-[800px] w-[1280px] overflow-hidden font-['Inter','Liberation_Sans',sans-serif]">
      <Defs />
      <Wallpaper />
      <div className="relative flex h-full flex-col">
        <MenuBar />
        <div className="mt-px flex h-[701px] shrink-0 flex-col overflow-hidden rounded-[10px] bg-[linear-gradient(90deg,#fff_3%,rgba(255,255,255,0)_16%,rgba(255,255,255,0)_84%,#fff_97%),linear-gradient(180deg,#fff_0%,#fff_94.5%,#e4e4e4_100%)]">
          <TitleBar />
          <Ribbon />
          <Header />
          <Body />
        </div>
        <div className="flex pt-px"><Dock /></div>
      </div>
    </div>
  );
}
